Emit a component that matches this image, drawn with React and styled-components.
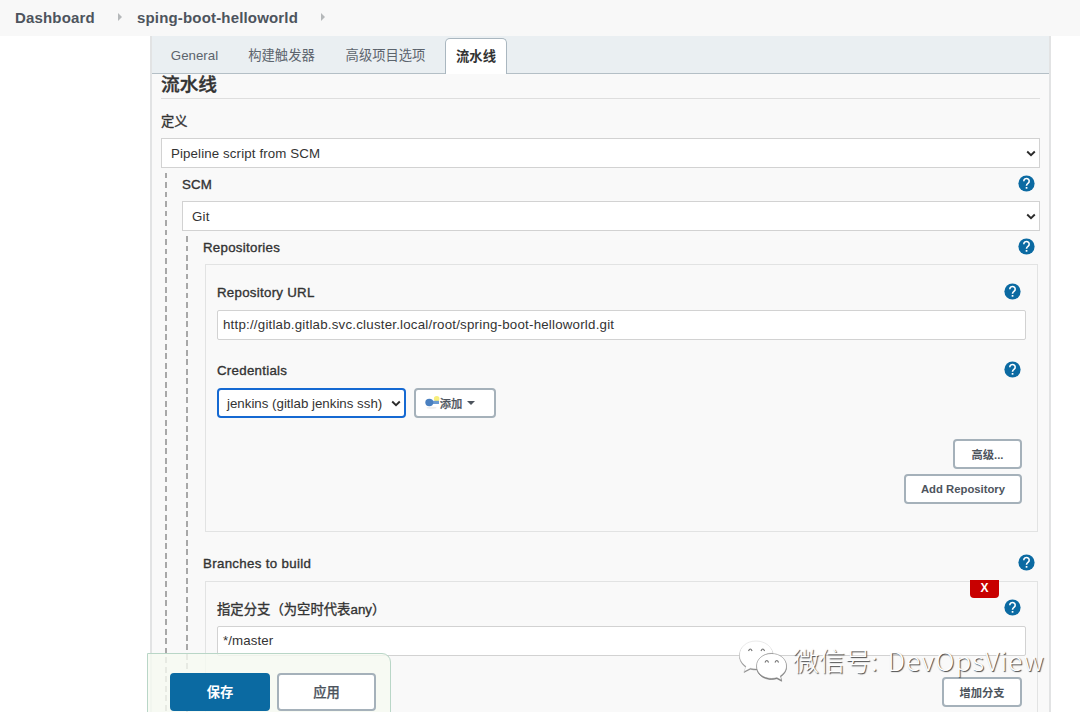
import React from "react";
import styled, { createGlobalStyle } from "styled-components";

const GlobalStyle = createGlobalStyle`
  * { box-sizing: border-box; }
  body {
    margin: 0;
    background: #fff;
    color: #333;
    font-family: "Liberation Sans", "Noto Sans CJK SC", sans-serif;
    font-size: 13.3px;
    overflow: hidden;
  }
`;

const Page = styled.div`
  position: relative;
  height: 712px;
  overflow: hidden;
`;

const Breadcrumbs = styled.header`
  display: flex;
  align-items: center;
  height: 36px;
  padding: 0 0 2px 15px;
  background: #f8f8f8;
`;

const Crumb = styled.span`
  width: ${(p) => p.$w}px;
  white-space: nowrap;
  font-size: 15px;
  font-weight: 700;
  letter-spacing: 0.17px;
  color: #4d545d;
`;

const CrumbArrow = styled.i`
  margin: 0 15px 0 23px;
  border: solid transparent;
  border-width: 4px 0 4px 4px;
  border-left-color: #b5b8ba;
`;

const Panel = styled.main`
  width: 901px;
  height: 676px;
  margin-left: 150px;
  border: solid #e2e3e4;
  border-width: 0 2px;
  background: #f9f9f9;
`;

const TabBar = styled.nav`
  display: flex;
  align-items: flex-end;
  height: 38px;
  padding-left: 9px;
  background: #eaeff2;
  border-bottom: 1px solid #b4bfc6;
`;

const Tab = styled.div`
  width: ${(p) => p.$w}px;
  height: 36px;
  line-height: 38px;
  text-align: center;
  white-space: nowrap;
  color: #5c646d;
`;

const ActiveTab = styled(Tab)`
  margin: 0 0 -1px 9px;
  line-height: 36px;
  border: 1.5px solid #aab7c0;
  border-bottom: 0;
  border-radius: 5px 5px 0 0;
  background: #fff;
  color: #333;
  font-weight: 700;
`;

const Form = styled.div`
  padding: 0 9px;
`;

const Title = styled.h2`
  height: 25px;
  margin: 0;
  border-bottom: 1px solid #dedede;
  font-size: 18.7px;
  font-weight: 500;
  line-height: 22px;
  -webkit-text-stroke: 0.4px;
`;

const LabelRow = styled.div`
  display: flex;
  align-items: center;
  justify-content: space-between;
  height: ${(p) => p.$h}px;
  padding: ${(p) => p.$pt || 0}px 5px ${(p) => p.$pb || 0}px 0;
`;

const Label = styled.span`
  color: #333;
  white-space: nowrap;
  letter-spacing: ${(p) => p.$ls ?? 0.27}px;
  -webkit-text-stroke: 0.35px #333;
`;

const Field = styled.div`
  display: flex;
  align-items: center;
  justify-content: space-between;
  height: 30px;
  white-space: nowrap;
  background: #fff;
  letter-spacing: ${(p) => p.$ls || 0}px;
`;

const Select = styled(Field)`
  width: ${(p) => (p.$w ? `${p.$w}px` : "auto")};
  padding: 0 3px 0 ${(p) => (p.$focus ? 8 : 9)}px;
  border: ${(p) => (p.$focus ? "2px solid #1569d2" : "1px solid #d2d2d2")};
  border-radius: ${(p) => (p.$focus ? 4 : 0)}px;
`;

const Input = styled(Field)`
  padding: 0 5px 1px;
  border: 1px solid #d2d2d2;
  border-radius: 2px;
`;

const Nested = styled.div`
  margin-left: 3px;
  padding-left: 18px;
  background: repeating-linear-gradient(#a8a8a8 0 5.5px, transparent 5.5px 9.5px) 0.5px 5px / 2.4px 100% no-repeat;
`;

const Group = styled.section`
  margin: 0 2px;
  height: ${(p) => p.$h}px;
  padding: 0 11px;
  border: 1px solid #e2e3e3;
`;

const CredentialRow = styled.div`
  display: flex;
  gap: 8px;
`;

const Button = styled.div`
  display: flex;
  align-items: center;
  justify-content: center;
  width: ${(p) => p.$w}px;
  height: ${(p) => p.$h || 30}px;
  padding-bottom: 1px;
  border: 2px solid ${(p) => (p.$primary ? "#0b6aa2" : "#a5b1ba")};
  border-radius: 4px;
  background: ${(p) => (p.$primary ? "#0b6aa2" : "#fff")};
  color: ${(p) => (p.$primary ? "#fff" : "#4d545d")};
  font-size: ${(p) => p.$fs || 11.3}px;
  font-weight: ${(p) => p.$weight || 700};
  -webkit-text-stroke: ${(p) => (p.$weight ? 0.25 : 0)}px;
  white-space: nowrap;
`;

const Actions = styled.div`
  display: flex;
  flex-direction: column;
  align-items: flex-end;
  gap: 5px;
  padding: 21px 4px 0 0;
`;

const Caret = styled.i`
  margin: 0 10px 0 5px;
  border: solid transparent;
  border-width: 4px 4px 0;
  border-top-color: #4d545d;
`;

const GroupHead = styled.div`
  display: flex;
  justify-content: flex-end;
  height: 16px;
  margin-top: -2px;
  padding-right: 27px;
`;

const DeleteButton = styled.div`
  width: 29px;
  height: 18px;
  border-radius: 0 0 4px 4px;
  background: #c80000;
  color: #fff;
  font-size: 12px;
  font-weight: 700;
  line-height: 17px;
  text-align: center;
`;

const SaveBar = styled.footer`
  position: absolute;
  left: 147px;
  bottom: -4px;
  display: flex;
  gap: 7px;
  width: 244px;
  height: 63px;
  padding: 19px 0 0 22px;
  border: 1px solid #b9d6c7;
  border-radius: 0 9px 0 0;
  background: rgba(246, 250, 241, 0.8);
`;

const Watermark = styled.div`
  position: absolute;
  left: 738px;
  top: 637px;
  display: flex;
  align-items: center;
  height: 44px;
  white-space: nowrap;
  color: #fff;
  font-family: "Noto Sans CJK SC", sans-serif;
  font-size: 26px;
  font-weight: 300;
  text-shadow: 1px 1px 1px #444;
`;

const WatermarkText = styled.span`
  margin-left: ${(p) => p.$ml}px;
  letter-spacing: ${(p) => p.$ls || 0}px;
`;

const LogoSvg = styled.svg`
  margin-top: 5px;
  filter: drop-shadow(0.5px 1px 0.5px #777);
`;

const HelpSvg = styled.svg`
  margin-bottom: 2px;
`;

const Help = () => (
  <HelpSvg width="17" height="17" viewBox="0 0 17 17">
    <circle cx="8.5" cy="8.5" r="8.1" fill="#0b6aa2" />
    <path d="M5.8 6.2a2.7 2.6 0 1 1 4.4 1.900C9.200 8.900 8.500 9.300 8.500 10.700" fill="none" stroke="#fff" strokeWidth="1.6" />
    <rect x="7.7" y="12" width="1.7" height="1.7" fill="#fff" />
  </HelpSvg>
);

const Chevron = () => (
  <svg width="10" height="7" viewBox="0 0 10 7">
    <path d="M1.2 1.5 5 5.1 8.8 1.5" fill="none" stroke="#2b2b2b" strokeWidth="1.9" />
  </svg>
);

const KeyIcon = () => (
  <svg width="15" height="15" viewBox="0 0 15 15">
    <ellipse cx="6.5" cy="12.7" rx="5" ry="1" fill="#ededed" />
    <circle cx="11.7" cy="3.8" r="2.8" fill="#f7ee7c" />
    <path d="M7 5.8h7v3.200H7z" fill="#6b9bd2" />
    <ellipse cx="4.3" cy="7.5" rx="4" ry="3.7" fill="#4a80c0" />
  </svg>
);

const ChatLogo = () => (
  <LogoSvg width="50" height="44" viewBox="0 0 50 44" fill="#fff">
    <path d="M18 1C8.500 1 1.500 7.200 1.500 15c0 4.700 2.500 8.500 6.500 11.200L6 31.500l6.400-3.300c2 .6 4 .8 6.200.8C18 20 25 13 35 13 33.500 6 26.500 1 18 1Z" stroke="#ccc" strokeWidth=".4" />
    <path d="M33.500 13.500C25 13.500 18.500 19 18.500 26s6.500 12.500 15 12.500c1.900 0 3.700-.3 5.400-.8l4.800 2.600-1.300-4.400c3.700-2.300 6.100-5.800 6.100-9.900 0-7-6.500-12.500-15-12.500Z" stroke="#888" strokeWidth=".6" />
    <path d="M10.500 11q1.800-4 3.600 0M23 11q1.800-4 3.600 0M27 22.500q1.800-4 3.600 0M37 22.500q1.800-4 3.600 0" fill="none" stroke="#777" strokeWidth="1.200" />
  </LogoSvg>
);

export default function App() {
  return (
    <Page>
      <GlobalStyle />
      <Breadcrumbs>
        <Crumb $w={80}>Dashboard</Crumb>
        <CrumbArrow />
        <Crumb $w={161}>sping-boot-helloworld</Crumb>
        <CrumbArrow />
      </Breadcrumbs>
      <Panel>
        <TabBar>
          <Tab $w={67}>General</Tab>
          <Tab $w={107}>构建触发器</Tab>
          <Tab $w={101}>高级项目选项</Tab>
          <ActiveTab $w={62}>流水线</ActiveTab>
        </TabBar>
        <Form>
          <Title>流水线</Title>
          <LabelRow $h={39} $pt={4}>
            <Label $ls={0}>定义</Label>
          </LabelRow>
          <Select $ls={0.12}>
            Pipeline script from SCM
            <Chevron />
          </Select>
          <Nested>
            <LabelRow $h={33} $pb={1}>
              <Label $ls={0.1}>SCM</Label>
              <Help />
            </LabelRow>
            <Select $ls={0.2}>
              Git
              <Chevron />
            </Select>
            <Nested>
              <LabelRow $h={33} $pb={1}>
                <Label>Repositories</Label>
                <Help />
              </LabelRow>
              <Group $h={268}>
                <LabelRow $h={45} $pt={10}>
                  <Label>Repository URL</Label>
                  <Help />
                </LabelRow>
                <Input $ls={0.215}>http://gitlab.gitlab.svc.cluster.local/root/spring-boot-helloworld.git</Input>
                <LabelRow $h={48} $pt={12}>
                  <Label>Credentials</Label>
                  <Help />
                </LabelRow>
                <CredentialRow>
                  <Select $w={189} $focus>
                    jenkins (gitlab jenkins ssh)
                    <Chevron />
                  </Select>
                  <Button $w={82} $weight={500}>
                    <KeyIcon />
                    添加
                    <Caret />
                  </Button>
                </CredentialRow>
                <Actions>
                  <Button $w={69}>高级...</Button>
                  <Button $w={118}>Add Repository</Button>
                </Actions>
              </Group>
              <LabelRow $h={49} $pt={14}>
                <Label $ls={0.32}>Branches to build</Label>
                <Help />
              </LabelRow>
              <Group $h={200}>
                <GroupHead>
                  <DeleteButton>X</DeleteButton>
                </GroupHead>
                <LabelRow $h={30} $pb={6}>
                  <Label $ls={0.05}>指定分支（为空时代表any）</Label>
                  <Help />
                </LabelRow>
                <Input $ls={0.1}>*/master</Input>
                <Actions>
                  <Button $w={80}>增加分支</Button>
                </Actions>
              </Group>
            </Nested>
          </Nested>
        </Form>
      </Panel>
      <SaveBar>
        <Button $w={100} $h={38} $fs={13.3} $primary>保存</Button>
        <Button $w={99} $h={38} $fs={13.3} $weight={500}>应用</Button>
      </SaveBar>
      <Watermark>
        <ChatLogo />
        <WatermarkText $ml={5}>微信号:</WatermarkText>
        <WatermarkText $ml={10} $ls={1.15}>DevOpsView</WatermarkText>
      </Watermark>
    </Page>
  );
}
